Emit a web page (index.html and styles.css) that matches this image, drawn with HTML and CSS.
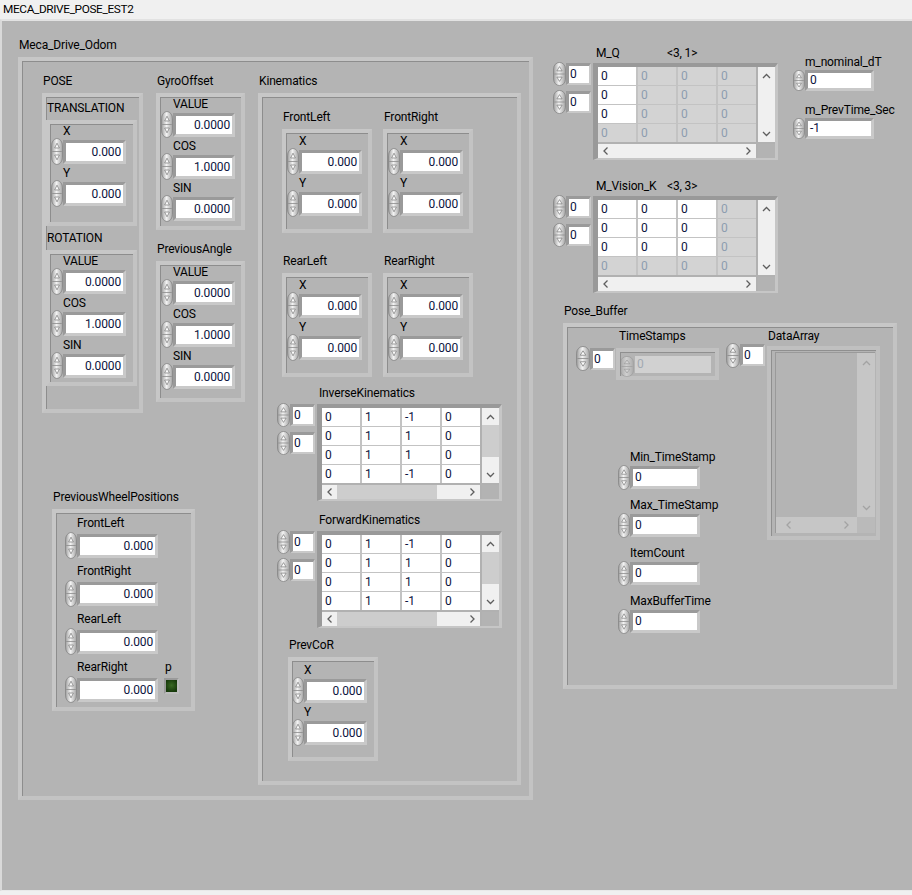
FILE: index.html
```html
<!DOCTYPE html>
<html lang="en">
<head>
<meta charset="utf-8">
<title>MECA_DRIVE_POSE_EST2</title>
<link rel="stylesheet" href="styles.css">
</head>
<body>
<svg class="defs" width="0" height="0" aria-hidden="true">
  <defs>
    <linearGradient id="spg" x1="0" y1="0" x2="1" y2="0">
      <stop offset="0" stop-color="#9d9d9d"/>
      <stop offset=".45" stop-color="#f3f3f3"/>
      <stop offset="1" stop-color="#a3a3a3"/>
    </linearGradient>
    <symbol id="spin" viewBox="0 0 12 26" preserveAspectRatio="none">
      <rect x=".5" y=".5" width="11" height="25" rx="5.5" ry="7" fill="url(#spg)" stroke="#858585" stroke-width=".8"/>
      <line x1="1.2" y1="13" x2="10.8" y2="13" stroke="#8c8c8c" stroke-width=".8"/>
      <path d="M6 5 8.4 9.6H3.6Z" fill="#fbfbfb" stroke="#787878" stroke-width=".7"/>
      <path d="M6 21 8.4 16.4H3.6Z" fill="#fbfbfb" stroke="#787878" stroke-width=".7"/>
    </symbol>
    <symbol id="chev" viewBox="0 0 9 6">
      <path d="M1 5 4.5 1.5 8 5" fill="none" stroke="currentColor" stroke-width="1.3"/>
    </symbol>
  </defs>
</svg>

<div class="titlebar">MECA_DRIVE_POSE_EST2</div>

<div class="panel">

  <!-- Meca_Drive_Odom -->
  <div class="obj odom cl">
    <div class="lbl">Meca_Drive_Odom</div>
    <div class="fr meca">
      <div class="lcol">
        <div class="row1">
          <div class="posec">
            <div class="cl">
              <div class="lbl">POSE</div>
              <div class="fr pose">
                <div class="cl">
                  <div class="lbl">TRANSLATION</div>
                  <div class="fr trans">
                    <div class="nb"><div class="lbl">X</div><div class="num"><svg class="sp"><use href="#spin" width="100%" height="100%"/></svg><div class="fld">0.000</div></div></div>
                    <div class="nb"><div class="lbl">Y</div><div class="num"><svg class="sp"><use href="#spin" width="100%" height="100%"/></svg><div class="fld">0.000</div></div></div>
                  </div>
                </div>
                <div class="cl rotc">
                  <div class="lbl">ROTATION</div>
                  <div class="fr rot">
                    <div class="nb"><div class="lbl">VALUE</div><div class="num"><svg class="sp"><use href="#spin" width="100%" height="100%"/></svg><div class="fld">0.0000</div></div></div>
                    <div class="nb"><div class="lbl">COS</div><div class="num"><svg class="sp"><use href="#spin" width="100%" height="100%"/></svg><div class="fld">1.0000</div></div></div>
                    <div class="nb"><div class="lbl">SIN</div><div class="num"><svg class="sp"><use href="#spin" width="100%" height="100%"/></svg><div class="fld">0.0000</div></div></div>
                  </div>
                </div>
              </div>
            </div>
          </div>
          <div class="gcol">
            <div class="cl">
              <div class="lbl">GyroOffset</div>
              <div class="fr gyro">
                <div class="nb"><div class="lbl">VALUE</div><div class="num"><svg class="sp"><use href="#spin" width="100%" height="100%"/></svg><div class="fld">0.0000</div></div></div>
                <div class="nb"><div class="lbl">COS</div><div class="num"><svg class="sp"><use href="#spin" width="100%" height="100%"/></svg><div class="fld">1.0000</div></div></div>
                <div class="nb"><div class="lbl">SIN</div><div class="num"><svg class="sp"><use href="#spin" width="100%" height="100%"/></svg><div class="fld">0.0000</div></div></div>
              </div>
            </div>
            <div class="cl pac">
              <div class="lbl">PreviousAngle</div>
              <div class="fr pa">
                <div class="nb"><div class="lbl">VALUE</div><div class="num"><svg class="sp"><use href="#spin" width="100%" height="100%"/></svg><div class="fld">0.0000</div></div></div>
                <div class="nb"><div class="lbl">COS</div><div class="num"><svg class="sp"><use href="#spin" width="100%" height="100%"/></svg><div class="fld">1.0000</div></div></div>
                <div class="nb"><div class="lbl">SIN</div><div class="num"><svg class="sp"><use href="#spin" width="100%" height="100%"/></svg><div class="fld">0.0000</div></div></div>
              </div>
            </div>
          </div>
        </div>

        <div class="cl pwpc">
          <div class="lbl">PreviousWheelPositions</div>
          <div class="fr pwp">
            <div class="nb"><div class="lbl">FrontLeft</div><div class="num"><svg class="sp"><use href="#spin" width="100%" height="100%"/></svg><div class="fld">0.000</div></div></div>
            <div class="nb"><div class="lbl">FrontRight</div><div class="num"><svg class="sp"><use href="#spin" width="100%" height="100%"/></svg><div class="fld">0.000</div></div></div>
            <div class="nb"><div class="lbl">RearLeft</div><div class="num"><svg class="sp"><use href="#spin" width="100%" height="100%"/></svg><div class="fld">0.000</div></div></div>
            <div class="lastrow">
              <div class="nb"><div class="lbl">RearRight</div><div class="num"><svg class="sp"><use href="#spin" width="100%" height="100%"/></svg><div class="fld">0.000</div></div></div>
              <div class="ledb"><div class="lbl">p</div><div class="led"></div></div>
            </div>
          </div>
        </div>
      </div>

      <!-- Kinematics -->
      <div class="cl">
        <div class="lbl">Kinematics</div>
        <div class="fr kin">
          <div class="krow">
            <div class="cl">
              <div class="lbl">FrontLeft</div>
              <div class="fr xy">
                <div class="nb"><div class="lbl">X</div><div class="num"><svg class="sp"><use href="#spin" width="100%" height="100%"/></svg><div class="fld">0.000</div></div></div>
                <div class="nb"><div class="lbl">Y</div><div class="num"><svg class="sp"><use href="#spin" width="100%" height="100%"/></svg><div class="fld">0.000</div></div></div>
              </div>
            </div>
            <div class="cl">
              <div class="lbl">FrontRight</div>
              <div class="fr xy">
                <div class="nb"><div class="lbl">X</div><div class="num"><svg class="sp"><use href="#spin" width="100%" height="100%"/></svg><div class="fld">0.000</div></div></div>
                <div class="nb"><div class="lbl">Y</div><div class="num"><svg class="sp"><use href="#spin" width="100%" height="100%"/></svg><div class="fld">0.000</div></div></div>
              </div>
            </div>
          </div>
          <div class="krow k2">
            <div class="cl">
              <div class="lbl">RearLeft</div>
              <div class="fr xy">
                <div class="nb"><div class="lbl">X</div><div class="num"><svg class="sp"><use href="#spin" width="100%" height="100%"/></svg><div class="fld">0.000</div></div></div>
                <div class="nb"><div class="lbl">Y</div><div class="num"><svg class="sp"><use href="#spin" width="100%" height="100%"/></svg><div class="fld">0.000</div></div></div>
              </div>
            </div>
            <div class="cl">
              <div class="lbl">RearRight</div>
              <div class="fr xy">
                <div class="nb"><div class="lbl">X</div><div class="num"><svg class="sp"><use href="#spin" width="100%" height="100%"/></svg><div class="fld">0.000</div></div></div>
                <div class="nb"><div class="lbl">Y</div><div class="num"><svg class="sp"><use href="#spin" width="100%" height="100%"/></svg><div class="fld">0.000</div></div></div>
              </div>
            </div>
          </div>

          <div class="arrb ik">
            <div class="alb">InverseKinematics</div>
            <div class="arow">
              <div class="ixc">
                <div class="ix"><svg class="sp"><use href="#spin" width="100%" height="100%"/></svg><div class="ixf">0</div></div>
                <div class="ix"><svg class="sp"><use href="#spin" width="100%" height="100%"/></svg><div class="ixf">0</div></div>
              </div>
              <div class="tbl">
                <div class="cells">
                  <div class="c">0</div><div class="c">1</div><div class="c">-1</div><div class="c">0</div>
                  <div class="c">0</div><div class="c">1</div><div class="c">1</div><div class="c">0</div>
                  <div class="c">0</div><div class="c">1</div><div class="c">1</div><div class="c">0</div>
                  <div class="c">0</div><div class="c">1</div><div class="c">-1</div><div class="c">0</div>
                </div>
                <div class="vs"><svg class="ch"><use href="#chev"/></svg><div class="th"></div><div></div><svg class="ch dn"><use href="#chev"/></svg></div>
                <div class="hs"><svg class="ch lf"><use href="#chev"/></svg><div class="th"></div><div></div><svg class="ch rt"><use href="#chev"/></svg></div>
                <div class="cr"></div>
              </div>
            </div>
          </div>

          <div class="arrb fk">
            <div class="alb">ForwardKinematics</div>
            <div class="arow">
              <div class="ixc">
                <div class="ix"><svg class="sp"><use href="#spin" width="100%" height="100%"/></svg><div class="ixf">0</div></div>
                <div class="ix"><svg class="sp"><use href="#spin" width="100%" height="100%"/></svg><div class="ixf">0</div></div>
              </div>
              <div class="tbl">
                <div class="cells">
                  <div class="c">0</div><div class="c">1</div><div class="c">-1</div><div class="c">0</div>
                  <div class="c">0</div><div class="c">1</div><div class="c">1</div><div class="c">0</div>
                  <div class="c">0</div><div class="c">1</div><div class="c">1</div><div class="c">0</div>
                  <div class="c">0</div><div class="c">1</div><div class="c">-1</div><div class="c">0</div>
                </div>
                <div class="vs"><svg class="ch"><use href="#chev"/></svg><div class="th"></div><div></div><svg class="ch dn"><use href="#chev"/></svg></div>
                <div class="hs"><svg class="ch lf"><use href="#chev"/></svg><div class="th"></div><div></div><svg class="ch rt"><use href="#chev"/></svg></div>
                <div class="cr"></div>
              </div>
            </div>
          </div>

          <div class="cl pcc">
            <div class="lbl">PrevCoR</div>
            <div class="fr xy pc">
              <div class="nb"><div class="lbl">X</div><div class="num"><svg class="sp"><use href="#spin" width="100%" height="100%"/></svg><div class="fld">0.000</div></div></div>
              <div class="nb"><div class="lbl">Y</div><div class="num"><svg class="sp"><use href="#spin" width="100%" height="100%"/></svg><div class="fld">0.000</div></div></div>
            </div>
          </div>
        </div>
      </div>
    </div>
  </div>

  <!-- M_Q -->
  <div class="obj mq arrb">
    <div class="alb"><span class="an">M_Q</span><span>&lt;3, 1&gt;</span></div>
    <div class="arow">
      <div class="ixc">
        <div class="ix"><svg class="sp"><use href="#spin" width="100%" height="100%"/></svg><div class="ixf">0</div></div>
        <div class="ix"><svg class="sp"><use href="#spin" width="100%" height="100%"/></svg><div class="ixf">0</div></div>
      </div>
      <div class="tbl">
        <div class="cells">
          <div class="c">0</div><div class="c d">0</div><div class="c d">0</div><div class="c d">0</div>
          <div class="c">0</div><div class="c d">0</div><div class="c d">0</div><div class="c d">0</div>
          <div class="c">0</div><div class="c d">0</div><div class="c d">0</div><div class="c d">0</div>
          <div class="c d">0</div><div class="c d">0</div><div class="c d">0</div><div class="c d">0</div>
        </div>
        <div class="vs nt"><svg class="ch"><use href="#chev"/></svg><div class="th"></div><div></div><svg class="ch dn"><use href="#chev"/></svg></div>
        <div class="hs nt"><svg class="ch lf"><use href="#chev"/></svg><div class="th"></div><div></div><svg class="ch rt"><use href="#chev"/></svg></div>
        <div class="cr"></div>
      </div>
    </div>
  </div>

  <!-- m_nominal_dT / m_PrevTime_Sec -->
  <div class="obj nom">
    <div class="nb"><div class="lbl">m_nominal_dT</div><div class="num"><svg class="sp"><use href="#spin" width="100%" height="100%"/></svg><div class="fld">0</div></div></div>
    <div class="nb"><div class="lbl">m_PrevTime_Sec</div><div class="num"><svg class="sp"><use href="#spin" width="100%" height="100%"/></svg><div class="fld">-1</div></div></div>
  </div>

  <!-- M_Vision_K -->
  <div class="obj mvk arrb">
    <div class="alb"><span class="an">M_Vision_K</span><span>&lt;3, 3&gt;</span></div>
    <div class="arow">
      <div class="ixc">
        <div class="ix"><svg class="sp"><use href="#spin" width="100%" height="100%"/></svg><div class="ixf">0</div></div>
        <div class="ix"><svg class="sp"><use href="#spin" width="100%" height="100%"/></svg><div class="ixf">0</div></div>
      </div>
      <div class="tbl">
        <div class="cells">
          <div class="c">0</div><div class="c">0</div><div class="c">0</div><div class="c d">0</div>
          <div class="c">0</div><div class="c">0</div><div class="c">0</div><div class="c d">0</div>
          <div class="c">0</div><div class="c">0</div><div class="c">0</div><div class="c d">0</div>
          <div class="c d">0</div><div class="c d">0</div><div class="c d">0</div><div class="c d">0</div>
        </div>
        <div class="vs nt"><svg class="ch"><use href="#chev"/></svg><div class="th"></div><div></div><svg class="ch dn"><use href="#chev"/></svg></div>
        <div class="hs nt"><svg class="ch lf"><use href="#chev"/></svg><div class="th"></div><div></div><svg class="ch rt"><use href="#chev"/></svg></div>
        <div class="cr"></div>
      </div>
    </div>
  </div>

  <!-- Pose_Buffer -->
  <div class="obj pbuf cl">
    <div class="lbl">Pose_Buffer</div>
    <div class="fr pb">
      <div class="pcol">
        <div class="arrb ts">
          <div class="alb">TimeStamps</div>
          <div class="arow">
            <div class="ix"><svg class="sp"><use href="#spin" width="100%" height="100%"/></svg><div class="ixf">0</div></div>
            <div class="tse">
              <svg class="sp dis"><use href="#spin" width="100%" height="100%"/></svg>
              <div class="dfld">0</div>
            </div>
          </div>
        </div>
        <div class="pbn">
          <div class="nb"><div class="lbl">Min_TimeStamp</div><div class="num"><svg class="sp"><use href="#spin" width="100%" height="100%"/></svg><div class="fld">0</div></div></div>
          <div class="nb"><div class="lbl">Max_TimeStamp</div><div class="num"><svg class="sp"><use href="#spin" width="100%" height="100%"/></svg><div class="fld">0</div></div></div>
          <div class="nb"><div class="lbl">ItemCount</div><div class="num"><svg class="sp"><use href="#spin" width="100%" height="100%"/></svg><div class="fld">0</div></div></div>
          <div class="nb"><div class="lbl">MaxBufferTime</div><div class="num"><svg class="sp"><use href="#spin" width="100%" height="100%"/></svg><div class="fld">0</div></div></div>
        </div>
      </div>
      <div class="arrb da">
        <div class="alb">DataArray</div>
        <div class="arow">
          <div class="ix"><svg class="sp"><use href="#spin" width="100%" height="100%"/></svg><div class="ixf">0</div></div>
          <div class="darr">
            <div class="dain">
              <div class="dbody"></div>
              <div class="dvs"><svg class="ch"><use href="#chev"/></svg><svg class="ch dn"><use href="#chev"/></svg></div>
              <div class="dhs"><svg class="ch lf"><use href="#chev"/></svg><svg class="ch rt"><use href="#chev"/></svg></div>
              <div class="dcr"></div>
            </div>
          </div>
        </div>
      </div>
    </div>
  </div>

</div>
</body>
</html>
```

FILE: styles.css
```css
* { box-sizing: border-box; }

body {
  margin: 0;
  width: 912px;
  height: 895px;
  overflow: hidden;
  background: #f0f0f0;
  font-family: Roboto, "Noto Sans", sans-serif;
  font-size: 12px;
  letter-spacing: -0.15px;
  color: #000;
}

.defs { display: block; width: 0; height: 0; }

.titlebar {
  height: 19px;
  padding-left: 3px;
  font-size: 11.8px;
  line-height: 18px;
  letter-spacing: -0.35px;
  background: #f0f0f0;
  color: #000;
}

/* LabVIEW front panel: a free canvas */
.panel {
  position: relative;
  height: 872px;
  background: #b4b4b4;
  border-top: 2px solid #e2e2e2;
  border-left: 2px solid #d9d9d9;
  border-bottom: 1px solid #e9e9e9;
}
.obj { position: absolute; }
.odom { left: 16px; top: 18px; }
.mq { left: 551px; top: 26px; }
.nom { left: 791px; top: 35px; }
.mvk { left: 551px; top: 159px; }
.pbuf { left: 561px; top: 284px; }

/* labels */
.lbl {
  display: block;
  height: 13px;
  line-height: 13px;
  white-space: nowrap;
}
.cl > .lbl { padding-left: 1px; margin-bottom: 5px; }

/* cluster frames */
.fr {
  border: 4px solid #c3c3c3;
  border-top-color: #c7c7c7;
  border-left-color: #c7c7c7;
  box-shadow: inset 1px 1px 0 #8d8d8d;
}

.meca { width: 515px; height: 743px; display: flex; padding: 14px 0 0 20px; }
.lcol { width: 216px; flex: none; }
.row1 { display: flex; }
.posec { width: 114px; flex: none; }
.pose { width: 101px; height: 320px; padding-top: 5px; }
.trans { width: 91px; height: 106px; padding: 1px 0 0 1px; }
.rotc { margin-top: 6px; }
.rot { width: 91px; height: 136px; padding: 1px 0 0 1px; }
.gyro { width: 89px; height: 137px; padding: 1px 0 0 1px; }
.pac { margin-top: 13px; }
.pa { width: 89px; height: 141px; padding: 1px 0 0 1px; }
.gyro .fld, .pa .fld { width: 62px; }

.pwpc { margin: 78px 0 0 10px; }
.pwp { width: 143px; height: 202px; padding: 4px 0 0 9px; }
.pwp .nb .lbl { margin-bottom: 2px; }
.pwp .nb { margin-bottom: 6px; }
.pwp .fld { width: 81px; }
.lastrow { display: flex; align-items: flex-start; }
.ledb { margin-left: 6px; }
.ledb .lbl { padding-left: 1px; }
.led {
  width: 15px;
  height: 16px;
  margin-top: 4px;
  border: 2px solid #bdbdbd;
  border-top-color: #9a9a9a;
  border-left-color: #9a9a9a;
  background: radial-gradient(circle at 50% 45%, #3b6a24, #173a0b 75%);
}

.kin { width: 263px; height: 692px; padding-top: 14px; }
.krow { display: flex; gap: 11px; margin-left: 20px; }
.k2 { margin-top: 22px; }
.xy { width: 90px; height: 104px; padding: 2px 0 0 1px; }
.pcc { margin: 11px 0 0 26px; }
.pc { padding: 3px 0 0 0; }

/* numeric controls */
.nb .lbl { margin-left: 12px; }
.nb { margin-bottom: 2px; }
.num { display: flex; align-items: center; height: 27px; }
.sp { width: 12px; height: 27px; flex: none; display: block; }
.fld {
  width: 63px;
  height: 24px;
  border: 3px solid;
  border-color: #9a9a9a #c9c9c9 #c9c9c9 #9a9a9a;
  background: #fff;
  text-align: right;
  padding-right: 2px;
  line-height: 18px;
  color: #0c1440;
  white-space: nowrap;
}

.nom .nb { margin-bottom: 13px; }
.nom .nb .lbl { margin-bottom: 1px; }
.nom .num { height: 21px; }
.nom .sp { height: 21px; }
.nom .fld { width: 69px; height: 21px; line-height: 15px; text-align: left; padding: 0 0 0 2px; }

/* arrays */
.arrb { display: flex; flex-direction: column; }
.alb { display: flex; height: 13px; line-height: 13px; margin: 0 0 3px 43px; white-space: nowrap; }
.an { width: 71px; }
.ik, .fk { margin-left: 15px; }
.ik { margin-top: 10px; }
.fk { margin-top: 13px; }
.ik .alb, .fk .alb { margin-left: 42px; margin-bottom: 4px; }
.arow { display: flex; align-items: flex-start; }
.ixc { display: flex; flex-direction: column; gap: 4px; width: 40px; flex: none; margin-top: -1px; }
.ix { display: flex; align-items: center; height: 24px; }
.ix .sp { width: 13px; height: 24px; }
.ixf {
  width: 25px;
  height: 22px;
  border: solid;
  border-width: 3px 2px 2px 3px;
  border-color: #9a9a9a #c9c9c9 #c9c9c9 #9a9a9a;
  background: #fff;
  padding-left: 1px;
  line-height: 17px;
  color: #0c1440;
}

.tbl {
  width: 185px;
  height: 97px;
  flex: none;
  border: solid;
  border-width: 4px 3px 2px 5px;
  border-color: #999 #c6c6c6 #c6c6c6 #999;
  background: #b1b1b1;
  display: grid;
  grid-template-columns: 158px 17px;
  grid-template-rows: 75px 14px;
  gap: 2px;
}
.cells {
  display: grid;
  grid-template-columns: repeat(4, 38px);
  grid-template-rows: repeat(4, 18px);
  gap: 1px 2px;
  background: #c3c3c3;
}
.c {
  background: #fff;
  padding-left: 3px;
  line-height: 18px;
  color: #0c1440;
}
.c.d { background: #d3d3d3; color: #8d9db0; }

.vs {
  display: grid;
  grid-template-rows: 17px 32px 1fr 17px;
  justify-items: center;
  align-items: center;
  background: #f0f0f0;
}
.hs {
  display: grid;
  grid-template-columns: 15px 100px 1fr 15px;
  justify-items: center;
  align-items: center;
  background: #f0f0f0;
}
.th { align-self: stretch; justify-self: stretch; background: #cdcdcd; }
.nt .th { background: transparent; }
.cr { background: #b3b3b3; }

.ch { width: 9px; height: 6px; display: block; color: #5e5e5e; }
.ch.dn { transform: rotate(180deg); }
.ch.lf { transform: rotate(-90deg); }
.ch.rt { transform: rotate(90deg); }

/* Pose_Buffer */
.pb { width: 334px; height: 366px; padding: 3px 0 0 9px; display: flex; }
.pcol { width: 150px; flex: none; }
.ts .ix { height: 25px; }
.ts .ix .sp, .da .ix .sp { width: 14px; height: 25px; }
.tse {
  width: 103px;
  height: 32px;
  margin: 2px 0 0 1px;
  border: 4px solid #c1c1c1;
  box-shadow: inset 1px 1px 0 #8f8f8f;
  padding-top: 4px;
  display: flex;
  align-items: flex-start;
}
.sp.dis { width: 14px; height: 21px; opacity: 0.45; }
.dfld {
  width: 76px;
  height: 17px;
  background: #d1d1d1;
  color: #a2a9b1;
  line-height: 17px;
  padding-left: 2px;
  margin-left: 1px;
}
.pbn { margin: 71px 0 0 42px; }
.pbn .nb { margin-bottom: 9px; }
.pbn .nb .lbl { margin-bottom: 1px; }
.pbn .num { height: 25px; }
.pbn .sp { height: 25px; }
.pbn .fld { width: 70px; height: 23px; line-height: 17px; text-align: left; padding: 0 0 0 2px; }

.da .alb { margin-left: 42px; }
.da .ix { margin-top: -4px; height: 26px; }
.darr {
  width: 113px;
  height: 194px;
  margin-left: 2px;
  border: 4px solid #c0c0c0;
  box-shadow: inset 1px 1px 0 #8f8f8f;
  padding: 2px 1px 3px 4px;
}
.dain {
  height: 100%;
  display: grid;
  grid-template-columns: 1fr 18px;
  grid-template-rows: 1fr 16px;
  border-top: 1px solid #9a9a9a;
  border-left: 1px solid #9a9a9a;
  background: #b4b4b4;
}
.dvs {
  background: #c6c6c6;
  display: flex;
  flex-direction: column;
  justify-content: space-between;
  align-items: center;
  padding: 7px 0 6px;
}
.dhs {
  background: #c6c6c6;
  display: flex;
  justify-content: space-between;
  align-items: center;
  padding: 0 6px 0 8px;
}
.dvs .ch, .dhs .ch { color: #a3a3a3; }
.dcr { background: #bababa; }
```
